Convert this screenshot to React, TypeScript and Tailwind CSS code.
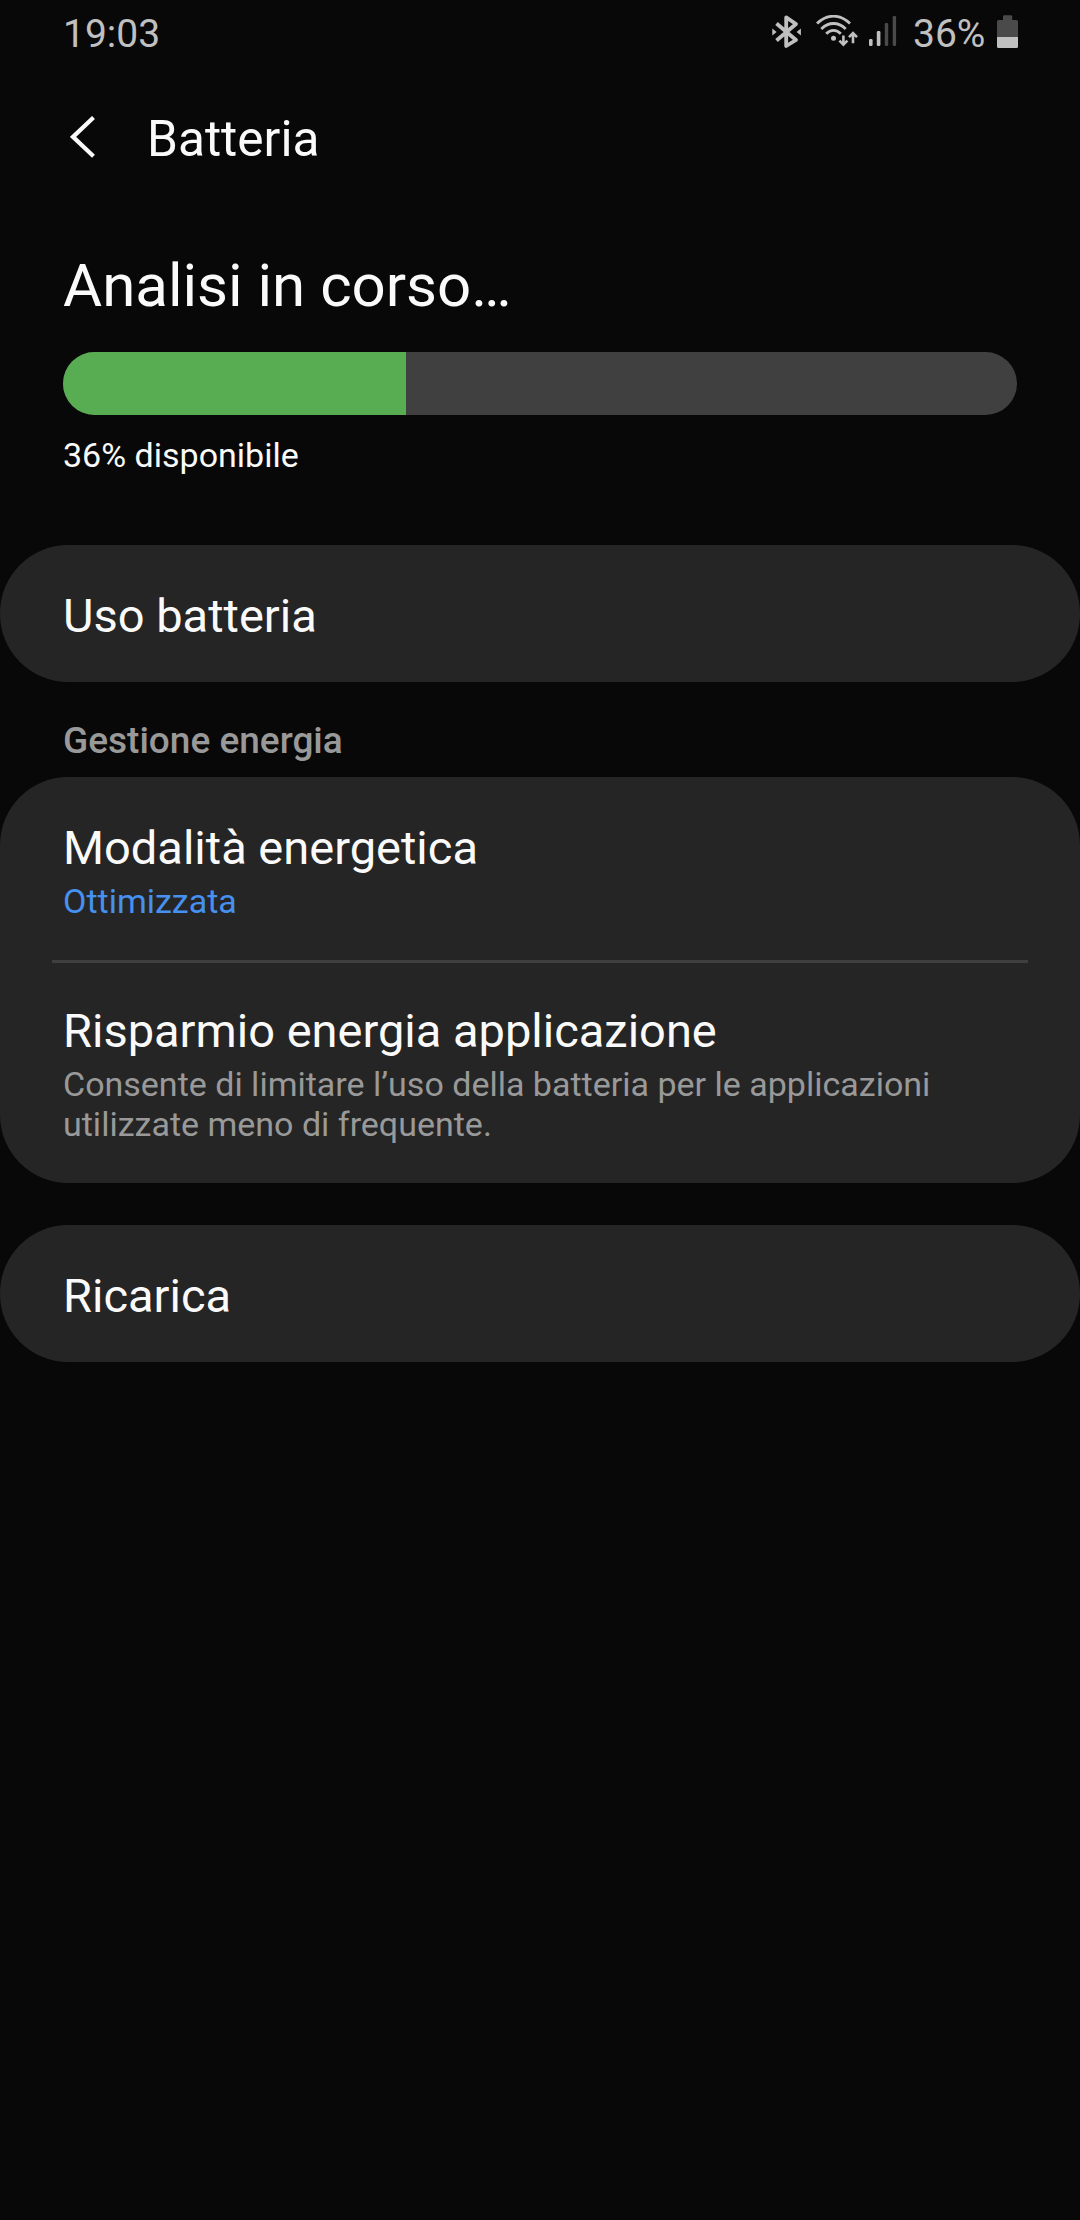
import type { ReactNode } from 'react';

const BATTERY_LEVEL = 36;

function BluetoothIcon() {
  return (
    <svg width="30" height="34" viewBox="0 0 30 34" fill="none">
      <path
        d="M4.5 8.5 L24 25 L14.2 31 V2.4 L24 9 L4.5 25.5"
        stroke="#c0c0c0"
        strokeWidth="3.8"
        strokeLinejoin="round"
      />
      <path d="M0.3 13.6 L4.6 17 L0.3 20.4 Z M28.9 13.6 L24.6 17 L28.9 20.4 Z" fill="#c0c0c0" />
    </svg>
  );
}

function WifiIcon() {
  return (
    <svg width="43" height="34" viewBox="0 0 43 34" fill="none">
      <g stroke="#c0c0c0" strokeWidth="2.8">
        <path d="M1 8.6 Q8.5 1.2 17.5 1.2 T34 8.6" />
        <path d="M5.3 14 Q10.8 8.5 17.5 8.5 T29.7 14" />
        <path d="M10.2 18.7 Q13.4 15.3 17.5 15.3 T24.8 18.7" />
      </g>
      <circle cx="17.5" cy="23.2" r="2.5" fill="#c0c0c0" />
      <g stroke="#c0c0c0" strokeWidth="2.6">
        <path d="M27.4 20.4 V29.6 M23.4 25.6 L27.4 29.6 L31.4 25.6" />
        <path d="M37 28.2 V18.6 M33 22.2 L37 18.2 L41 22.2" />
      </g>
    </svg>
  );
}

function SignalIcon() {
  return (
    <svg width="28" height="31" viewBox="0 0 28 31">
      <rect x="0" y="23" width="3.6" height="7" rx="1.2" fill="#c0c0c0" />
      <rect x="7.8" y="15" width="3.6" height="15" rx="1.2" fill="#c0c0c0" />
      <rect x="15.8" y="7" width="3.4" height="23" rx="1.2" fill="#4a4a4a" />
      <rect x="23.7" y="0" width="3.4" height="30" rx="1.2" fill="#4a4a4a" />
    </svg>
  );
}

function BatteryIcon() {
  return (
    <svg width="21" height="33" viewBox="0 0 21 33">
      <path d="M6 6 V1.5 Q6 0.3 7.2 0.3 H14 Q15.2 0.3 15.2 1.5 V6 Z" fill="#4a4a4a" />
      <path d="M0 22 V6.5 Q0 5 1.5 5 H19.5 Q21 5 21 6.5 V22 Z" fill="#4a4a4a" />
      <path d="M0 22 H21 V31.5 Q21 33 19.5 33 H1.5 Q0 33 0 31.5 Z" fill="#c0c0c0" />
    </svg>
  );
}

function StatusBar() {
  return (
    <div className="flex h-[67px] items-center justify-between pr-[62px] pl-[63px] text-[39px] leading-[46px] text-[#c0c0c0]">
      <span>19:03</span>
      <div className="flex h-full items-start pt-[15px]">
        <BluetoothIcon />
        <span className="ml-[14px]">
          <WifiIcon />
        </span>
        <span className="mt-px ml-[10px]">
          <SignalIcon />
        </span>
        <span className="-mt-[4px] ml-[16px] w-[84px]">{BATTERY_LEVEL}%</span>
        <BatteryIcon />
      </div>
    </div>
  );
}

function Card({ children }: { children: ReactNode }) {
  return <section className="rounded-[68px] bg-[#252525]">{children}</section>;
}

function SingleRow({ title }: { title: string }) {
  return (
    <button className="flex h-[137px] w-full items-center px-[63px] pt-[5px] text-left text-[47px]">
      {title}
    </button>
  );
}

export default function App() {
  return (
    <main className="flex h-[2220px] w-[1080px] flex-col overflow-hidden bg-[#080808] font-['Roboto',sans-serif] text-[#fafafa]">
      <StatusBar />

      <header className="flex h-[144px] items-center pl-[70px]">
        <svg width="26" height="42" viewBox="0 0 26 42" fill="none" className="mb-[5px]">
          <path d="M23.5 1.5 L3 20.9 L23.5 40.3" stroke="#fafafa" strokeWidth="4.2" />
        </svg>
        <h1 className="ml-[51px] text-[49.6px] leading-[60px]">Batteria</h1>
      </header>

      <section className="h-[334px] px-[63px] pt-[40px]">
        <h2 className="text-[60px] leading-[70px]">Analisi in corso…</h2>
        <div className="mt-[31px] h-[63px] overflow-hidden rounded-full bg-[#404040]">
          <div className="h-full bg-[#58ad52]" style={{ width: `${BATTERY_LEVEL}%` }} />
        </div>
        <p className="mt-[20px] text-[34px] leading-[40px]">{BATTERY_LEVEL}% disponibile</p>
      </section>

      <Card>
        <SingleRow title="Uso batteria" />
      </Card>

      <h3 className="h-[95px] px-[63px] pt-[38px] text-[37px] leading-[42px] font-medium text-[#999999]">
        Gestione energia
      </h3>

      <Card>
        <div className="h-[183px] px-[63px] pt-[46px]">
          <p className="text-[47px] leading-[50px]">Modalità energetica</p>
          <p className="mt-[8px] text-[34px] leading-[40px] text-[#4690f0]">Ottimizzata</p>
        </div>
        <hr className="mx-[52px] h-[3px] border-0 bg-[#3f3f3f]" />
        <div className="h-[220px] px-[63px] pt-[43px]">
          <p className="text-[47px] leading-[50px]">Risparmio energia applicazione</p>
          <p className="mt-[8px] text-[34px] leading-[40px] text-[#999999]">
            Consente di limitare l’uso della batteria per le applicazioni
            <br />
            utilizzate meno di frequente.
          </p>
        </div>
      </Card>

      <div className="mt-[42px]">
        <Card>
          <SingleRow title="Ricarica" />
        </Card>
      </div>
    </main>
  );
}
